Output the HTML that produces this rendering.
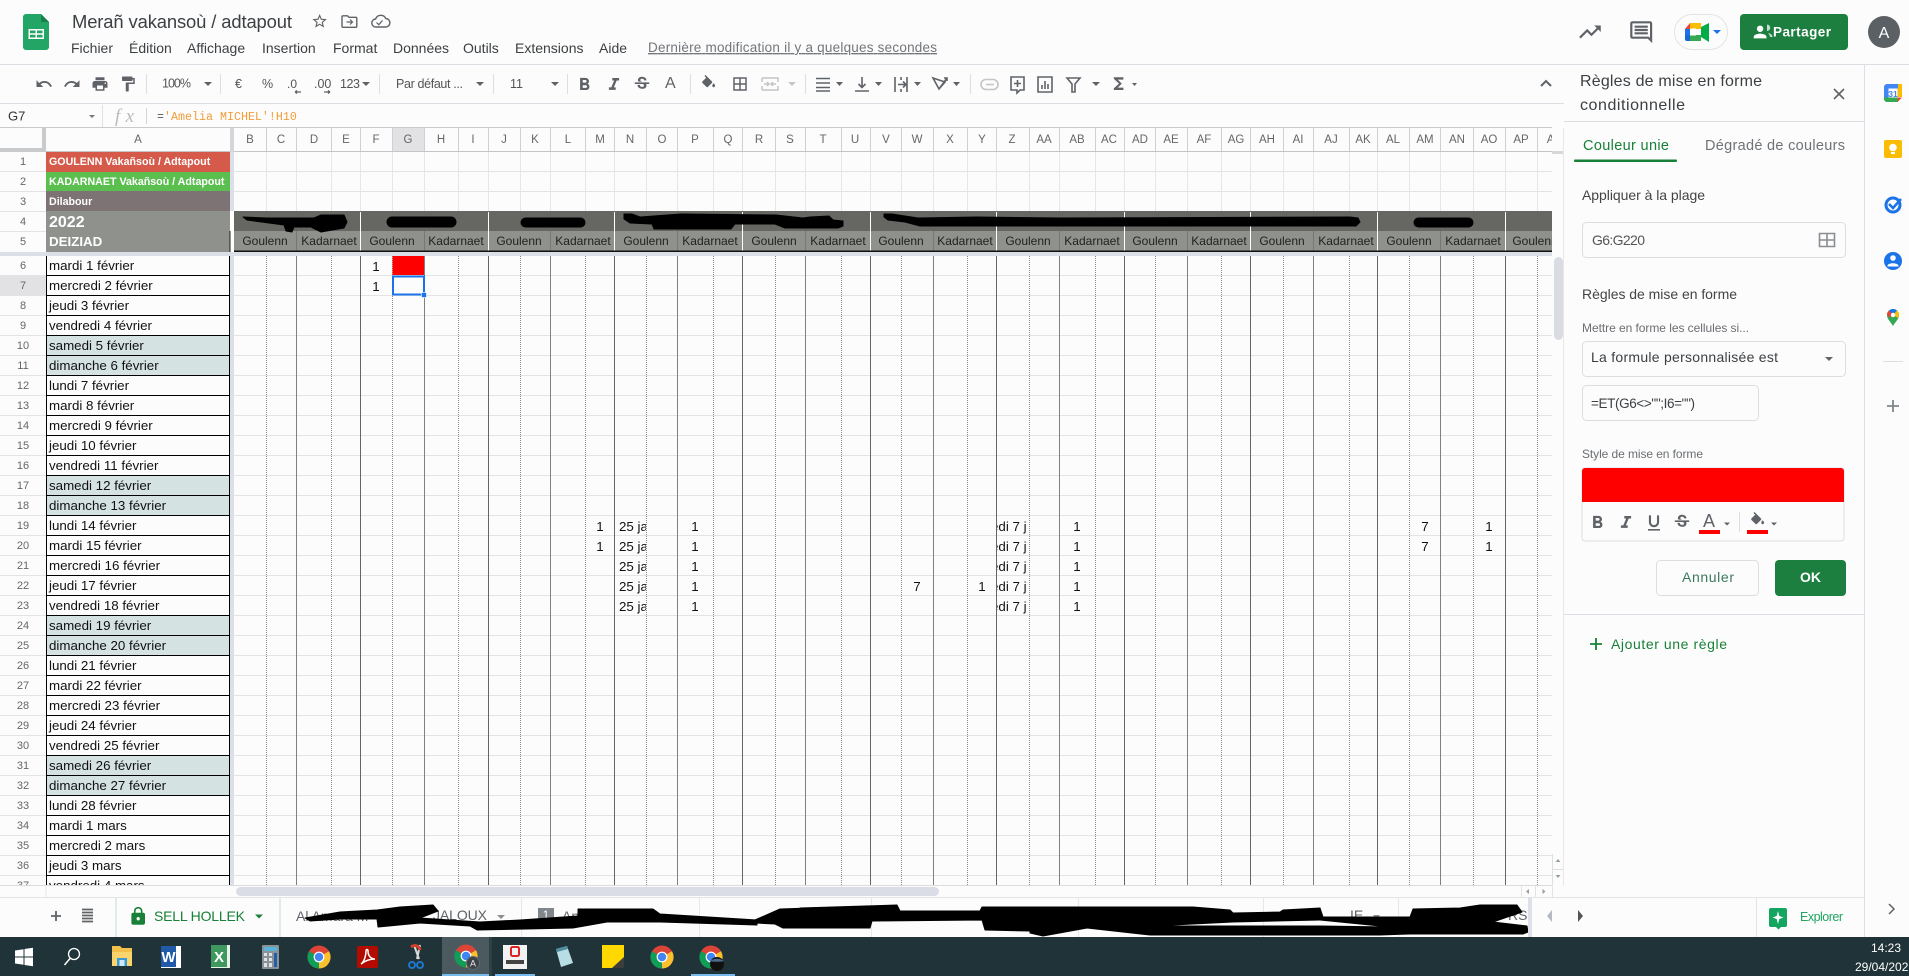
<!DOCTYPE html>
<html><head><meta charset="utf-8"><title>Merañ vakansoù / adtapout</title>
<style>
html,body{margin:0;padding:0;background:#fcfcfc;width:1909px;height:976px;overflow:hidden}
svg{display:block;font-family:"Liberation Sans",sans-serif}
.c{font-size:13.33px;fill:#111}
.n{font-size:11px;fill:#666;text-anchor:middle}
.h{font-size:11.5px;fill:#666;text-anchor:middle}
.g{font-size:12px;fill:#222;text-anchor:middle}
.d{font-size:13.33px;fill:#111;text-anchor:middle}
.m{font-size:14px;fill:#3c4043}
.t{font-size:12.5px;fill:#555}
.w{font-weight:bold;fill:#fff;font-size:10.67px}
.s{fill:#3c4043}
</style></head><body>
<svg width="1909" height="976" viewBox="0 0 1909 976" xmlns="http://www.w3.org/2000/svg">
<defs>
<pattern id="blk" width="10" height="20" patternUnits="userSpaceOnUse"><rect y="15" width="10" height="1" fill="#000"/></pattern>
<pattern id="lgt" width="10" height="20" patternUnits="userSpaceOnUse"><rect y="15" width="10" height="1" fill="#e3e3e3"/></pattern>
<g id="chrome"><circle r="11.5" fill="#db4437"/><path d="M10 -5.75A11.5 11.5 0 0 1 0 11.5L0 0Z" fill="#fbc02d"/><path d="M0 11.5A11.5 11.5 0 0 1 -10 -5.75L0 0Z" fill="#0f9d58"/><circle r="5.4" fill="#fff"/><circle r="4.2" fill="#4285f4"/></g>
<path id="strike" d="M7.240 8.750c-.26-.48-.39-1.030-.39-1.670 0-.61.13-1.160.4-1.670.26-.5.63-.93 1.110-1.290.48-.35 1.050-.63 1.700-.83.66-.19 1.390-.29 2.180-.29.81 0 1.540.11 2.210.34.66.22 1.230.54 1.690.94.47.4.83.88 1.080 1.430.25.55.38 1.150.38 1.810h-3.010c0-.31-.05-.59-.15-.85-.09-.27-.24-.49-.44-.68-.2-.19-.45-.33-.75-.44-.3-.1-.66-.16-1.060-.16-.39 0-.74.04-1.030.13-.29.09-.53.21-.72.36-.19.16-.34.34-.44.55-.1.21-.15.43-.15.66 0 .48.25.88.74 1.210.38.25.77.48 1.410.7H7.390c-.05-.08-.11-.17-.15-.25zM21 12v-2H3v2h9.620c.18.07.4.14.55.2.37.17.66.34.87.51.21.17.35.36.43.57.07.2.11.43.11.69 0 .23-.05.45-.14.66-.09.2-.23.38-.42.53-.19.15-.42.26-.71.35-.29.08-.63.13-1.010.13-.43 0-.83-.04-1.180-.13s-.66-.23-.91-.42c-.25-.19-.45-.44-.59-.75-.14-.31-.25-.76-.25-1.210H6.400c0 .55.08 1.130.24 1.580.16.45.37.85.65 1.210.28.35.6.66.98.92.37.26.78.48 1.220.65.44.17.9.3 1.380.39.48.08.96.13 1.440.13.8 0 1.530-.09 2.180-.28s1.210-.45 1.670-.79c.46-.34.82-.77 1.070-1.270s.38-1.070.38-1.710c0-.6-.1-1.140-.31-1.610-.05-.11-.11-.23-.17-.33H21z"/>
</defs>
<rect width="1909" height="976" fill="#fcfcfc"/>

<!-- top bar -->
<path d="M26 14h15l8 8v25a3 3 0 0 1-3 3H26a3 3 0 0 1-3-3V17a3 3 0 0 1 3-3z" fill="#23a566"/>
<path d="M41 14l8 8h-8z" fill="#188048"/>
<path d="M28.500 29h15.500v10h-15.500z M30 30.500v2.800h5.500v-2.800z M37 30.500v2.800h5.500v-2.800z M30 34.800v2.700h5.500v-2.700z M37 34.800v2.700h5.500v-2.700z" fill="#fff" fill-rule="evenodd"/>
<text x="72" y="28" font-size="18.4" fill="#3c4043" textLength="220">Merañ vakansoù / adtapout</text>
<path transform="translate(311,12.500) scale(.72)" d="M22 9.240l-7.190-.62L12 2 9.190 8.630 2 9.240l5.460 4.730L5.820 21 12 17.270 18.180 21l-1.630-7.030L22 9.240zM12 15.400l-3.760 2.270 1-4.280-3.320-2.880 4.380-.38L12 6.100l1.710 4.040 4.380.38-3.320 2.880 1 4.280L12 15.400z" fill="#5f6368"/>
<path d="M343 15.800h4.500l1.500 1.500h6.800a1 1 0 0 1 1 1v8a1 1 0 0 1-1 1h-12.800a1 1 0 0 1-1-1V16.800a1 1 0 0 1 1-1z" fill="none" stroke="#5f6368" stroke-width="1.400"/>
<path d="M346.500 22h6M350 19.500l2.500 2.500-2.500 2.500" fill="none" stroke="#5f6368" stroke-width="1.200"/>
<path d="M376 27a4 4 0 0 1-.4-8 5.500 5.500 0 0 1 10.200-.5 3.800 3.800 0 0 1-.3 8.500z" fill="none" stroke="#5f6368" stroke-width="1.400"/>
<path d="M376.500 22.500l2.300 2.200 3.700-4.200" fill="none" stroke="#5f6368" stroke-width="1.200"/>
<g class="m">
<text x="71" y="53">Fichier</text><text x="129" y="53">Édition</text><text x="187" y="53">Affichage</text><text x="262" y="53">Insertion</text><text x="333" y="53">Format</text><text x="393" y="53">Données</text><text x="463" y="53">Outils</text><text x="515" y="53">Extensions</text><text x="599" y="53">Aide</text>
</g>
<text x="648" y="52" font-size="13.500" fill="#72767a" text-decoration="underline" textLength="289">Dernière modification il y a quelques secondes</text>

<path transform="translate(1577,19) scale(1.080)" d="M16 6l2.290 2.290-4.880 4.880-4-4L2 16.590 3.410 18l6-6 4 4 6.300-6.290L22 12V6z" fill="#5f6368"/>
<path transform="translate(1628,19) scale(1.100)" d="M21.990 4c0-1.100-.89-2-1.990-2H4c-1.100 0-2 .9-2 2v12c0 1.100.9 2 2 2h14l4 4-.01-18zM20 4v13.170L18.830 16H4V4h16zM6 12h12v2H6zm0-3h12v2H6zm0-3h12v2H6z" fill="#5f6368"/>
<rect x="1674.500" y="14.500" width="53" height="35" rx="17.500" fill="#fcfcfc" stroke="#e3e3e6"/>
<path d="M1690 23h11v6h-11z" fill="#fbbc04"/><path d="M1685 29l5-6v6z" fill="#ea4335"/><path d="M1685 29h5v6h-5z" fill="#1a73e8"/><path d="M1685 35h5v6h-3a2 2 0 0 1-2-2z" fill="#1967d2"/><path d="M1690 35h11v6h-11z" fill="#34a853"/><path d="M1701 27v10l8 5V23z" fill="#00ac47"/><rect x="1690" y="28.500" width="6" height="7" fill="#fff"/>
<path d="M1713 30h8l-4 4z" fill="#1a73e8"/>
<rect x="1740" y="14" width="108" height="36" rx="4" fill="#1c7f3f"/>
<path d="M1767 24.500a3 3 0 0 1 0 6.500zM1768 33c2.500.5 4.500 1.800 4.500 4h-2.500c0-1.500-1-3-2-4z" fill="#bfe0cb"/>
<path transform="translate(1750.500,22.400) scale(.8)" d="M12 12c2.210 0 4-1.790 4-4s-1.790-4-4-4-4 1.790-4 4 1.790 4 4 4zm0 2c-2.670 0-8 1.340-8 4v2h16v-2c0-2.660-5.330-4-8-4z" fill="#fff"/>
<text x="1773" y="36.500" font-size="13.500" font-weight="bold" fill="#fff" textLength="58">Partager</text>
<circle cx="1884" cy="32" r="16" fill="#5b6064"/>
<text x="1884" y="38" font-size="16" fill="#fff" text-anchor="middle">A</text>
<rect y="64" width="1909" height="1" fill="#dcdee3"/>

<!-- toolbar -->
<rect y="103" width="1564" height="1" fill="#dcdee3"/>
<g fill="#5f6368">
<path transform="translate(35,75) scale(.75)" d="M12.500 8c-2.650 0-5.050.99-6.900 2.600L2 7v9h9l-3.620-3.620c1.390-1.160 3.160-1.880 5.120-1.880 3.540 0 6.550 2.310 7.600 5.500l2.370-.78C21.080 11.030 17.150 8 12.500 8z"/>
<path transform="translate(63,75) scale(.75)" d="M18.400 10.600C16.550 8.990 14.150 8 11.500 8c-4.650 0-8.580 3.030-9.960 7.220L3.900 16c1.050-3.190 4.050-5.500 7.600-5.500 1.950 0 3.730.72 5.120 1.880L13 16h9V7l-3.600 3.600z"/>
<path transform="translate(91,75) scale(.75)" d="M19 8H5c-1.660 0-3 1.340-3 3v6h4v4h12v-4h4v-6c0-1.660-1.340-3-3-3zm-3 11H8v-5h8v5zm3-7c-.55 0-1-.45-1-1s.45-1 1-1 1 .45 1 1-.45 1-1 1zm-1-9H6v4h12V3z"/>
<path transform="translate(119,75) scale(.75)" d="M18 4V3c0-.55-.45-1-1-1H5c-.55 0-1 .45-1 1v4c0 .55.45 1 1 1h12c.55 0 1-.45 1-1V6h1v4H9v11c0 .55.45 1 1 1h2c.55 0 1-.45 1-1v-9h8V4h-3z"/>
<path transform="translate(574,74.400) scale(.87)" d="M15.600 10.790c.97-.67 1.650-1.770 1.650-2.790 0-2.260-1.750-4-4-4H7v14h7.040c2.090 0 3.710-1.700 3.710-3.790 0-1.520-.86-2.820-2.150-3.420zM10 6.500h3c.83 0 1.500.67 1.500 1.500s-.67 1.500-1.500 1.500h-3v-3zm3.500 9H10v-3h3.500c.83 0 1.500.67 1.500 1.500s-.67 1.500-1.500 1.500z"/>
<path transform="translate(603.800,74.600) scale(.85)" d="M10 4v3h2.210l-3.420 8H6v3h8v-3h-2.210l3.420-8H18V4z"/>
<use href="#strike" transform="translate(632.400,74.400) scale(.8)"/>
<path transform="translate(700,75) scale(.72)" d="M16.560 8.940L7.620 0 6.210 1.410l2.380 2.380-5.150 5.150c-.59.59-.59 1.540 0 2.120l5.500 5.500c.29.29.68.44 1.060.44s.77-.15 1.060-.44l5.500-5.500c.59-.58.59-1.530 0-2.120zM19 11.500s-2 2.170-2 3.500c0 1.100.9 2 2 2s2-.9 2-2c0-1.330-2-3.500-2-3.500z"/>
<path transform="translate(731,75) scale(.75)" d="M3 3v18h18V3H3zm8 16H5v-6h6v6zm0-8H5V5h6v6zm8 8h-6v-6h6v6zm0-8h-6V5h6v6z"/>
<path transform="translate(1109,74) scale(.8)" d="M18 4H6v2l6.500 6L6 18v2h12v-3h-7l5-5-5-5h7z"/>
<!-- carets -->
<path d="M204 82h8l-4 4zM476 82h8l-4 4zM551 82h8l-4 4zM836 82h7l-3.500 4zM875 82h7l-3.500 4zM914 82h7l-3.500 4zM953 82h7l-3.500 4zM1092 82h8l-4 4zM1132 83h5l-2.500 3zM362 82h8l-4 4z"/>
<path d="M788 82h8l-4 4z" fill="#c4c6c9"/>
</g>
<g fill="none" stroke="#c2c4c7" stroke-width="1.500"><path d="M762 78h16v4M762 90h16v-4M762 78v4M762 86v4M764 84h4M776 84h-4M767 82l2 2-2 2M773 82l-2 2 2 2"/></g>
<g fill="none" stroke="#5f6368" stroke-width="1.600">
<path d="M816 78.500h14M816 83h14M816 87.500h14M816 91h14"/>
<path d="M862 77v10M858.500 84l3.500 3.500 3.500-3.500M855 91h14"/>
<path d="M895 77v15M907 77v15M901 77v3M901 89v3M898 84.500h7M903 81.500l3 3-3 3"/>
<path d="M933 78l12 4-6 7zM939 89l8-11M944 78l3 0 0 3"/>
<path d="M1011 77h13v13h-4l-3 3v-3h-6zM1017.500 80v7M1014 83.500h7"/>
<path d="M1038 77h14v15h-14zM1042 89v-4M1045 89v-8M1048 89v-5"/>
<path d="M1067 78h13l-5 6v8h-3v-8z"/>
<path d="M1541 86l5-5 5 5" stroke-width="2"/>
</g>
<rect x="981" y="79.500" width="17" height="10" rx="5" fill="none" stroke="#c2c4c7" stroke-width="1.600"/><path d="M986 84.500h8" stroke="#c2c4c7" stroke-width="1.500"/>
<path d="M146.500 74v20M220.500 74v20M379.500 74v20M493.500 74v20M567.500 74v20M690.500 74v20M805.500 74v20M970.500 74v20" stroke="#dcdee3"/>
<g class="t">
<text x="162" y="87.500" textLength="29">100%</text>
<text x="235" y="88">€</text><text x="262" y="88">%</text>
<text x="287" y="88" font-size="12">.0</text><text x="314" y="88">.00</text><text x="340" y="88" textLength="20">123</text>
<text x="396" y="88" textLength="67">Par défaut ...</text>
<text x="510" y="88">11</text>
<text x="665" y="88" font-size="16" fill="#5f6368">A</text>
</g>
<path d="M295 92h6M295 92l2-1.500M295 92l2 1.500M324 92h6M330 92l-2-1.500M330 92l-2 1.500" stroke="#5f6368" stroke-width="1.300" fill="none"/>

<!-- formula bar -->
<rect y="127" width="1552" height="1" fill="#c9cacc"/>
<text x="8" y="120.500" font-size="13" fill="#333">G7</text>
<path d="M89 115h6l-3 3z" fill="#777"/>
<path d="M102.500 105v22" stroke="#e8dfd8"/><path d="M146.500 108v16" stroke="#d5d6d9"/>
<text x="115" y="122" font-size="19" fill="#bbb" font-style="italic" font-family="Liberation Serif" textLength="19">fx</text>
<text x="157" y="120" font-family="Liberation Mono" font-size="11.670" fill="#555">=<tspan fill="#f29d38">'Amelia MICHEL'!H10</tspan></text>

<!-- column header -->
<rect y="128" width="1552" height="23" fill="#fcfcfc"/>
<rect x="392" y="128" width="32" height="23" fill="#e2e2e5"/>
<rect y="151" width="1552" height="1" fill="#c4c5c7"/>
<rect x="42" y="128" width="4" height="24" fill="#c8cacc"/><rect y="148" width="46" height="4" fill="#c8cacc"/>
<rect x="230" y="128" width="4" height="24" fill="#d3d5d9"/>
<path d="M266.500 128V151M296.500 128V151M331.500 128V151M360.500 128V151M392.500 128V151M424.500 128V151M458.500 128V151M488.500 128V151M520.500 128V151M550.500 128V151M585.500 128V151M614.500 128V151M646.500 128V151M677.500 128V151M713.500 128V151M742.500 128V151M775.500 128V151M805.500 128V151M841.500 128V151M870.500 128V151M901.500 128V151M933.500 128V151M967.500 128V151M996.500 128V151M1029.500 128V151M1059.500 128V151M1095.500 128V151M1124.500 128V151M1155.500 128V151M1187.500 128V151M1221.500 128V151M1250.500 128V151M1283.500 128V151M1313.500 128V151M1349.500 128V151M1377.500 128V151M1409.500 128V151M1440.500 128V151M1473.500 128V151M1505.500 128V151M1537.500 128V151" stroke="#cfd0d2"/>
<g class="h">
<text x="138" y="143">A</text><text x="250" y="143">B</text><text x="281" y="143">C</text><text x="314" y="143">D</text><text x="346" y="143">E</text><text x="376" y="143">F</text><text x="408" y="143">G</text><text x="441" y="143">H</text><text x="473" y="143">I</text><text x="504" y="143">J</text><text x="535" y="143">K</text><text x="568" y="143">L</text><text x="600" y="143">M</text><text x="630" y="143">N</text><text x="662" y="143">O</text><text x="695" y="143">P</text><text x="728" y="143">Q</text><text x="759" y="143">R</text><text x="790" y="143">S</text><text x="823" y="143">T</text><text x="855" y="143">U</text><text x="886" y="143">V</text><text x="917" y="143">W</text><text x="950" y="143">X</text><text x="982" y="143">Y</text><text x="1012" y="143">Z</text><text x="1044" y="143">AA</text><text x="1077" y="143">AB</text><text x="1109" y="143">AC</text><text x="1140" y="143">AD</text><text x="1171" y="143">AE</text><text x="1204" y="143">AF</text><text x="1236" y="143">AG</text><text x="1267" y="143">AH</text><text x="1298" y="143">AI</text><text x="1331" y="143">AJ</text><text x="1363" y="143">AK</text><text x="1393" y="143">AL</text><text x="1425" y="143">AM</text><text x="1457" y="143">AN</text><text x="1489" y="143">AO</text><text x="1521" y="143">AP</text><text x="1555" y="143">AQ</text>
</g>

<!-- top rows 1-3 -->
<path d="M0 171.500H46M234 171.500H1552M0 191.500H46M234 191.500H1552M0 211.500H46M0 231.500H46" stroke="#e3e3e3"/>
<path d="M266.500 152V211M296.500 152V211M331.500 152V211M360.500 152V211M392.500 152V211M424.500 152V211M458.500 152V211M488.500 152V211M520.500 152V211M550.500 152V211M585.500 152V211M614.500 152V211M646.500 152V211M677.500 152V211M713.500 152V211M742.500 152V211M775.500 152V211M805.500 152V211M841.500 152V211M870.500 152V211M901.500 152V211M933.500 152V211M967.500 152V211M996.500 152V211M1029.500 152V211M1059.500 152V211M1095.500 152V211M1124.500 152V211M1155.500 152V211M1187.500 152V211M1221.500 152V211M1250.500 152V211M1283.500 152V211M1313.500 152V211M1349.500 152V211M1377.500 152V211M1409.500 152V211M1440.500 152V211M1473.500 152V211M1505.500 152V211M1537.500 152V211" stroke="#e6e6e6"/>
<rect x="230" y="152" width="4" height="59" fill="#dadfe8"/>
<rect x="46" y="152" width="184" height="20" fill="#d55a4a"/>
<rect x="46" y="172" width="184" height="19" fill="#5abf4f"/>
<rect x="46" y="191" width="184" height="20" fill="#7e7374"/>
<rect x="46" y="211" width="184" height="41" fill="#8f918d"/>
<text class="w" x="49" y="165">GOULENN Vakañsoù / Adtapout</text>
<text class="w" x="49" y="185">KADARNAET Vakañsoù / Adtapout</text>
<text class="w" x="49" y="205">Dilabour</text>
<text x="49" y="227" font-size="16" font-weight="bold" fill="#fff">2022</text>
<text x="49" y="246" font-size="13.330" font-weight="bold" fill="#fff">DEIZIAD</text>

<!-- rows 4/5 -->
<rect x="234" y="211" width="1318" height="20" fill="#666762"/>
<rect x="234" y="231" width="1318" height="20" fill="#8f918c"/>
<path d="M296.500 231V251M424.500 231V251M550.500 231V251M677.500 231V251M805.500 231V251M933.500 231V251M1059.500 231V251M1187.500 231V251M1313.500 231V251M1440.500 231V251" stroke="#777873"/>
<path d="M360.500 212V251M488.500 212V251M614.500 212V251M742.500 212V251M870.500 212V251M996.500 212V251M1124.500 212V251M1250.500 212V251M1377.500 212V251M1505.500 212V251" stroke="#fff"/>
<rect x="230" y="211" width="4" height="41" fill="#fff"/>
<rect x="229.500" y="231" width="1" height="21" fill="#222"/>
<rect x="234" y="250.500" width="1318" height="1.500" fill="#111"/>
<g class="g">
<text x="265" y="245">Goulenn</text><text x="329" y="245">Kadarnaet</text>
<text x="392" y="245">Goulenn</text><text x="456" y="245">Kadarnaet</text>
<text x="519" y="245">Goulenn</text><text x="583" y="245">Kadarnaet</text>
<text x="646" y="245">Goulenn</text><text x="710" y="245">Kadarnaet</text>
<text x="774" y="245">Goulenn</text><text x="838" y="245">Kadarnaet</text>
<text x="901" y="245">Goulenn</text><text x="965" y="245">Kadarnaet</text>
<text x="1028" y="245">Goulenn</text><text x="1092" y="245">Kadarnaet</text>
<text x="1155" y="245">Goulenn</text><text x="1219" y="245">Kadarnaet</text>
<text x="1282" y="245">Goulenn</text><text x="1346" y="245">Kadarnaet</text>
<text x="1409" y="245">Goulenn</text><text x="1473" y="245">Kadarnaet</text>
<text x="1535" y="245">Goulenn</text>
</g>
<g fill="#000" stroke="#000" stroke-width="1" stroke-linejoin="round">
<path d="M243 217L267 218L314 218L321 215L344 215L347 222L344 228L321 232L311 227L294 227L292 232L286 231L284 225L247 220Z"/>
<rect x="387" y="217" width="69" height="10" rx="5"/>
<rect x="521" y="218" width="64" height="9" rx="4.500"/>
<path d="M624 214L632 214L640 217L681 214L776 215L803 218L810 217L829 216L833 220L843 221L843 226L838 228L785 228L775 224L735 224L731 229L654 229L652 224L630 223L624 219Z"/>
<path d="M884 214L892 214L918 218L977 217L1060 218L1350 217L1358 218L1360 222L1356 226L1100 226L920 226L905 222L888 220L884 217Z"/>
<rect x="1414" y="218" width="59" height="9" rx="4.500"/>
</g>

<!-- frozen band -->
<rect y="252" width="1552" height="4" fill="#dadfe8"/>
<rect x="230" y="256" width="4" height="630" fill="#dadfe8"/>

<!-- data grid lines -->
<rect x="234" y="256" width="1318" height="630" fill="url(#lgt)"/>
<rect x="0" y="256" width="46" height="630" fill="url(#lgt)"/>
<rect x="0" y="276" width="46" height="19" fill="#e2e2e5"/>
<path d="M266.500 256V886M331.500 256V886M392.500 256V886M458.500 256V886M520.500 256V886M585.500 256V886M646.500 256V886M713.500 256V886M775.500 256V886M841.500 256V886M901.500 256V886M967.500 256V886M1029.500 256V886M1095.500 256V886M1155.500 256V886M1221.500 256V886M1283.500 256V886M1349.500 256V886M1409.500 256V886M1473.500 256V886M1537.500 256V886" stroke="#8a8a8a" stroke-dasharray="1 1"/>
<path d="M296.500 256V886M424.500 256V886M550.500 256V886M677.500 256V886M805.500 256V886M933.500 256V886M1059.500 256V886M1187.500 256V886M1313.500 256V886M1440.500 256V886" stroke="#808080"/>
<path d="M360.500 256V886M488.500 256V886M614.500 256V886M742.500 256V886M870.500 256V886M996.500 256V886M1124.500 256V886M1250.500 256V886M1377.500 256V886M1505.500 256V886" stroke="#666"/>

<!-- column A -->
<rect x="46" y="256" width="184" height="630" fill="#fcfcfc"/>
<rect x="46" y="336" width="184" height="40" fill="#d5e2e2"/>
<rect x="46" y="476" width="184" height="40" fill="#d5e2e2"/>
<rect x="46" y="616" width="184" height="40" fill="#d5e2e2"/>
<rect x="46" y="756" width="184" height="40" fill="#d5e2e2"/>
<rect x="46" y="256" width="184" height="630" fill="url(#blk)"/>
<path d="M46.500 256V886M229.500 256V886" stroke="#000"/>
<g class="c">
<text x="49" y="270">mardi 1 février</text><text x="49" y="290">mercredi 2 février</text><text x="49" y="310">jeudi 3 février</text><text x="49" y="330">vendredi 4 février</text><text x="49" y="350">samedi 5 février</text><text x="49" y="370">dimanche 6 février</text><text x="49" y="390">lundi 7 février</text><text x="49" y="410">mardi 8 février</text><text x="49" y="430">mercredi 9 février</text><text x="49" y="450">jeudi 10 février</text><text x="49" y="470">vendredi 11 février</text><text x="49" y="490">samedi 12 février</text><text x="49" y="510">dimanche 13 février</text><text x="49" y="530">lundi 14 février</text><text x="49" y="550">mardi 15 février</text><text x="49" y="570">mercredi 16 février</text><text x="49" y="590">jeudi 17 février</text><text x="49" y="610">vendredi 18 février</text><text x="49" y="630">samedi 19 février</text><text x="49" y="650">dimanche 20 février</text><text x="49" y="670">lundi 21 février</text><text x="49" y="690">mardi 22 février</text><text x="49" y="710">mercredi 23 février</text><text x="49" y="730">jeudi 24 février</text><text x="49" y="750">vendredi 25 février</text><text x="49" y="770">samedi 26 février</text><text x="49" y="790">dimanche 27 février</text><text x="49" y="810">lundi 28 février</text><text x="49" y="830">mardi 1 mars</text><text x="49" y="850">mercredi 2 mars</text><text x="49" y="870">jeudi 3 mars</text><text x="49" y="890">vendredi 4 mars</text>
</g>
<g class="n">
<text x="23" y="165">1</text><text x="23" y="185">2</text><text x="23" y="205">3</text><text x="23" y="225">4</text><text x="23" y="245">5</text>
<text x="23" y="269">6</text><text x="23" y="289">7</text><text x="23" y="309">8</text><text x="23" y="329">9</text><text x="23" y="349">10</text><text x="23" y="369">11</text><text x="23" y="389">12</text><text x="23" y="409">13</text><text x="23" y="429">14</text><text x="23" y="449">15</text><text x="23" y="469">16</text><text x="23" y="489">17</text><text x="23" y="509">18</text><text x="23" y="529">19</text><text x="23" y="549">20</text><text x="23" y="569">21</text><text x="23" y="589">22</text><text x="23" y="609">23</text><text x="23" y="629">24</text><text x="23" y="649">25</text><text x="23" y="669">26</text><text x="23" y="689">27</text><text x="23" y="709">28</text><text x="23" y="729">29</text><text x="23" y="749">30</text><text x="23" y="769">31</text><text x="23" y="789">32</text><text x="23" y="809">33</text><text x="23" y="829">34</text><text x="23" y="849">35</text><text x="23" y="869">36</text><text x="23" y="889">37</text>
</g>

<!-- cells -->
<rect x="392.500" y="256" width="31.500" height="19" fill="#fe0000"/>
<rect x="393" y="276.500" width="31" height="18" fill="none" stroke="#1a73e8" stroke-width="2"/>
<rect x="421.500" y="292.500" width="5" height="5" fill="#1a73e8" stroke="#fff" stroke-width=".6"/>
<g class="d">
<text x="376" y="271">1</text><text x="376" y="291">1</text>
<text x="600" y="531">1</text><text x="600" y="551">1</text>
<text x="695" y="531">1</text><text x="695" y="551">1</text><text x="695" y="571">1</text><text x="695" y="591">1</text><text x="695" y="611">1</text>
<text x="917" y="591">7</text><text x="982" y="591">1</text>
<text x="1077" y="531">1</text><text x="1077" y="551">1</text><text x="1077" y="571">1</text><text x="1077" y="591">1</text><text x="1077" y="611">1</text>
<text x="1425" y="531">7</text><text x="1425" y="551">7</text>
<text x="1489" y="531">1</text><text x="1489" y="551">1</text>
</g>
<svg x="618" y="516" width="28" height="100"><g font-size="13.330" fill="#111"><text x="1" y="15">25 janvier</text><text x="1" y="35">25 janvier</text><text x="1" y="55">25 janvier</text><text x="1" y="75">25 janvier</text><text x="1" y="95">25 janvier</text></g></svg>
<svg x="997" y="516" width="30" height="100"><g font-size="13.330" fill="#111"><text x="-6" y="15">edi 7 janvier</text><text x="-6" y="35">edi 7 janvier</text><text x="-6" y="55">edi 7 janvier</text><text x="-6" y="75">edi 7 janvier</text><text x="-6" y="95">edi 7 janvier</text></g></svg>

<!-- scrollbars -->
<rect x="1552" y="128" width="12" height="769" fill="#fcfcfc"/>
<rect x="1552" y="151" width="11" height="3" fill="#d6d7da"/>
<path d="M1563.500 128V897" stroke="#f0e6e0"/>
<rect x="1554" y="257" width="9" height="83" rx="4.500" fill="#dadce4"/>
<path d="M1552.500 854V886M1552.500 869.500H1563" stroke="#dedfe2"/>
<path d="M1555.500 862l2.500-3 2.500 3zM1555.500 875l2.500 3 2.500-3z" fill="#9a9ca0"/>
<rect y="885.500" width="1564" height="11.500" fill="#fcfcfc"/>
<rect y="885" width="1552" height="1" fill="#dcdcdc"/>
<rect x="45.500" y="885" width="1" height="12" fill="#e5e6e8"/>
<rect x="236" y="887" width="703" height="9" rx="4.500" fill="#dadce6"/>
<path d="M1529 889l-3 2.500 3 2.500zM1542.500 889v5l3-2.500z" fill="#9a9ca0"/>
<path d="M1521.500 886V897M1535.500 886V897M1552.500 886V897" stroke="#e2e3e5"/>

<!-- sidebar -->
<rect x="1564" y="65" width="300" height="832" fill="#fcfcfc"/>
<path d="M1864.500 65V937" stroke="#dcdee8"/>
<rect x="1564" y="121" width="300" height="1" fill="#dcdee3"/>
<text x="1580" y="86" font-size="16" fill="#3c4043" textLength="182">Règles de mise en forme</text>
<text x="1580" y="110" font-size="16" fill="#3c4043" textLength="105">conditionnelle</text>
<path d="M1834 89l10 10M1844 89l-10 10" stroke="#5f6368" stroke-width="1.600"/>
<text x="1583" y="150" font-size="14.500" fill="#188038" textLength="86">Couleur unie</text>
<rect x="1574" y="159.500" width="103" height="2.500" rx="1" fill="#188038"/>
<text x="1705" y="150" font-size="14.500" fill="#6f7276" textLength="140">Dégradé de couleurs</text>
<text x="1582" y="200" font-size="14" fill="#444" textLength="123">Appliquer à la plage</text>
<rect x="1582.500" y="222.500" width="263" height="35" rx="4" fill="#fcfcfc" stroke="#dcdee2"/>
<text x="1592" y="245" font-size="14" fill="#555" textLength="53">G6:G220</text>
<path d="M1819.500 233.500h15v13h-15zM1827 233.500v13M1819.500 240h15" fill="none" stroke="#8a8d91" stroke-width="1.600"/>
<text x="1582" y="299" font-size="14" fill="#444" textLength="155">Règles de mise en forme</text>
<text x="1582" y="332" font-size="12" fill="#6b6e72" textLength="167">Mettre en forme les cellules si...</text>
<rect x="1582.500" y="341.500" width="263" height="35" rx="4" fill="#fcfcfc" stroke="#dcdee2"/>
<text x="1591" y="362" font-size="14" fill="#3c4043" textLength="187">La formule personnalisée est</text>
<path d="M1825 357h8l-4 4z" fill="#5f6368"/>
<rect x="1582.500" y="385.500" width="176" height="35" rx="4" fill="#fcfcfc" stroke="#dcdee2"/>
<text x="1591" y="408" font-size="13.500" fill="#3c4043" textLength="104">=ET(G6&lt;&gt;"";I6="")</text>
<text x="1582" y="458" font-size="12" fill="#6b6e72" textLength="121">Style de mise en forme</text>
<rect x="1582" y="468" width="262" height="73" rx="3" fill="#fcfcfc" stroke="#dcdee2"/>
<path d="M1582 471a3 3 0 0 1 3-3h256a3 3 0 0 1 3 3v31h-262z" fill="#fe0000"/>
<g fill="#5f6368">
<path transform="translate(1587,512.400) scale(.87)" d="M15.600 10.790c.97-.67 1.650-1.770 1.650-2.790 0-2.260-1.750-4-4-4H7v14h7.040c2.090 0 3.710-1.700 3.710-3.790 0-1.520-.86-2.820-2.150-3.420zM10 6.500h3c.83 0 1.500.67 1.500 1.500s-.67 1.500-1.500 1.500h-3v-3zm3.500 9H10v-3h3.500c.83 0 1.500.67 1.500 1.500s-.67 1.500-1.500 1.500z"/>
<path transform="translate(1615.800,512.600) scale(.85)" d="M10 4v3h2.210l-3.420 8H6v3h8v-3h-2.210l3.420-8H18V4z"/>
<path transform="translate(1643.800,512.800) scale(.85)" d="M12 17c3.310 0 6-2.690 6-6V3h-2.500v8c0 1.930-1.570 3.500-3.500 3.500S8.500 12.930 8.500 11V3H6v8c0 3.310 2.690 6 6 6zm-7 2v2h14v-2H5z"/>
<use href="#strike" transform="translate(1672.400,512.400) scale(.8)"/>
<path transform="translate(1749,512) scale(.72)" d="M16.560 8.940L7.620 0 6.210 1.410l2.380 2.380-5.150 5.150c-.59.59-.59 1.540 0 2.120l5.500 5.500c.29.29.68.44 1.060.44s.77-.15 1.060-.44l5.500-5.500c.59-.58.59-1.530 0-2.120zM19 11.500s-2 2.170-2 3.500c0 1.100.9 2 2 2s2-.9 2-2c0-1.330-2-3.500-2-3.500z"/>
<path d="M1724 522.500h6l-3 3zM1771 522.500h6l-3 3z"/>
</g>
<text x="1709" y="527" font-size="18" fill="#5f6368" text-anchor="middle">A</text>
<rect x="1699" y="530" width="21" height="4" fill="#fe0000"/>
<rect x="1747" y="530" width="21" height="4" fill="#fe0000"/>
<path d="M1739.500 512v20" stroke="#dcdee2"/>
<rect x="1656.500" y="560.500" width="102" height="35" rx="4" fill="#fcfcfc" stroke="#dcdee2"/>
<text x="1682" y="582" font-size="14" fill="#3a7a5c" textLength="52">Annuler</text>
<rect x="1775" y="560" width="71" height="36" rx="4" fill="#1c7f3f"/>
<text x="1800" y="582" font-size="14" font-weight="bold" fill="#fff" textLength="21">OK</text>
<rect x="1564" y="614" width="300" height="1" fill="#dcdee8"/>
<path d="M1596 638v12M1590 644h12" stroke="#188038" stroke-width="1.800"/>
<text x="1611" y="649" font-size="14" fill="#188038" textLength="116">Ajouter une règle</text>

<!-- right strip -->
<path d="M1884 84h18v18h-18z" fill="#fff"/>
<path d="M1884 87a3 3 0 0 1 3-3h11v4.500h-14z" fill="#4285f4"/><path d="M1898 84h4v4.500h-4z" fill="#fbbc04"/><path d="M1897.500 88.500h4.500v8.500h-4.500z" fill="#fbbc04"/><path d="M1884 88.500h4.500v9.500H1884z" fill="#4285f4"/><path d="M1884 97.500h14v4.500h-11a3 3 0 0 1-3-3z" fill="#34a853"/><path d="M1897.500 97.500h4.500l-4.500 4.500z" fill="#ea4335"/>
<text x="1893" y="97" font-size="8.500" font-weight="bold" fill="#4285f4" text-anchor="middle">31</text>
<rect x="1884" y="140" width="18" height="18" rx="2" fill="#fbbc04"/>
<circle cx="1893" cy="147.500" r="3.800" fill="#fff"/><rect x="1891" y="152" width="4" height="2" fill="#fff"/>
<circle cx="1893" cy="205" r="7" fill="none" stroke="#1a73e8" stroke-width="3"/>
<path d="M1889 204l4 4 8-9" fill="none" stroke="#1a73e8" stroke-width="2.500"/>
<circle cx="1893" cy="261" r="9" fill="#1a73e8"/>
<circle cx="1893" cy="258" r="2.800" fill="#fff"/><path d="M1887.500 265.500c1-3 9.500-3 11 0v1h-11z" fill="#fff"/>
<path d="M1893 326c-3-5-6-7-6-11a6 6 0 0 1 12 0c0 4-3 6-6 11z" fill="#34a853"/>
<path d="M1887 315a6 6 0 0 1 2-4.500l4 4-3 3z" fill="#ea4335"/><path d="M1889 310.500a6 6 0 0 1 8 0l-4 4z" fill="#1a73e8"/><path d="M1897 310.500a6 6 0 0 1 2 4.500c0 1-.5 2-1 3l-5-3z" fill="#fbbc04"/>
<circle cx="1893" cy="315" r="2.200" fill="#fff"/>
<rect x="1883" y="361" width="20" height="1" fill="#dcdee3"/>
<path d="M1893 400v12M1887 406h12" stroke="#80868b" stroke-width="1.800"/>

<!-- tab bar -->
<rect y="897" width="1864" height="1" fill="#e3e4e6"/>
<rect y="898" width="1864" height="39" fill="#fcfcfc"/>
<path d="M56 911v10M51 916h10" stroke="#5f6368" stroke-width="1.800"/>
<path d="M82 909.500h11M82 912.500h11M82 915.500h11M82 918.500h11M82 921.500h11" stroke="#5f6368" stroke-width="1.700"/>
<rect x="115" y="898" width="2" height="39" fill="#e3eaea"/><rect x="279" y="898" width="2" height="39" fill="#e3eaea"/>
<path transform="translate(128,906) scale(.85)" d="M18 8h-1V6c0-2.760-2.240-5-5-5S7 3.240 7 6v2H6c-1.100 0-2 .9-2 2v10c0 1.100.9 2 2 2h12c1.100 0 2-.9 2-2V10c0-1.100-.9-2-2-2zm-6 9c-1.100 0-2-.9-2-2s.9-2 2-2 2 .9 2 2-.9 2-2 2zm3.100-9H8.900V6c0-1.710 1.390-3.100 3.100-3.100 1.710 0 3.100 1.390 3.100 3.100v2z" fill="#188038"/>
<text x="154" y="921" font-size="14" fill="#188038" textLength="91">SELL HOLLEK</text>
<path d="M255 914.500h8l-4 4z" fill="#188038"/>
<text x="296" y="921" font-size="14" fill="#5f6368">Al Amara M</text>
<text x="433" y="920" font-size="14" fill="#5f6368" textLength="54">JALOUX</text>
<path d="M497 915h8l-4 4z" fill="#8a8d91"/>
<path d="M521.500 898V937M699.500 898V937M871.500 898V937M1078.500 898V937M1263.500 898V937M1398.500 898V937" stroke="#e6e7e9"/>
<rect x="538" y="908" width="16" height="13" fill="#80868b"/>
<text x="546" y="919" font-size="11.500" fill="#fff" text-anchor="middle">1</text>
<text x="562" y="921" font-size="14" fill="#5f6368">An</text>
<text x="1350" y="920" font-size="14" fill="#5f6368">IE</text>
<path d="M1373 915h7l-3.500 4z" fill="#8a8d91"/>
<text x="1508" y="920" font-size="14" fill="#5f6368">RS</text>
<g fill="#000" stroke="#000" stroke-width="1" stroke-linejoin="round">
<path d="M305 918L340 912L377 910L400 907L433 905L438 911L420 918L480 922L520 920L578 916L578 909L653 909L660 914L757 920L757 925L660 922L607 922L573 928L477 930L470 926L420 923L378 927L377 919L340 919L310 921Z"/>
<path d="M755 920L780 909L810 908L810 928L783 928L775 924L755 923Z"/>
<path d="M800 908L897 905L900 911L980 911L982 907L1193 907L1230 910L1233 913L1280 912L1283 910L1320 908L1320 920L1233 922L1153 926L1320 926L1320 935L1150 935L1087 928L1043 936L1030 933L1030 931L985 930L982 920L872 921L870 928L800 928Z"/>
<path d="M1320 908L1323 917L1410 917L1413 909L1460 908L1480 905L1517 905L1522 912L1493 922L1527 926L1528 932L1523 934L1410 934L1380 935L1320 935L1320 926L1390 927L1320 920Z"/>
</g>
<rect x="1528" y="897" width="4" height="40" fill="#dde0e8"/>
<path d="M1552 910l-5 6 5 6z" fill="#b4b9c4"/>
<path d="M1578 910l5 6-5 6z" fill="#555"/>
<path d="M1756.500 898V937" stroke="#e3e4e6"/>
<path d="M1771 908h14a2 2 0 0 1 2 2v15a2 2 0 0 1-2 2h-4l-2.500 2.500-2.500-2.500h-5a2 2 0 0 1-2-2v-15a2 2 0 0 1 2-2z" fill="#14a560"/>
<path d="M1778 911l1.300 5 4.200 1.500-4.200 1.500-1.300 5-1.300-5-4.200-1.500 4.200-1.500z" fill="#fff"/>
<text x="1800" y="921" font-size="12.500" fill="#1fa463" textLength="43">Explorer</text>
<path d="M1889 904l5 5-5 5" fill="none" stroke="#5f6368" stroke-width="1.500"/>

<!-- taskbar -->
<rect y="937" width="1909" height="39" fill="#203338"/>
<rect x="442" y="937" width="47" height="39" fill="#4a5a5e"/>
<rect x="489" y="937" width="3" height="39" fill="#2e4145"/>
<rect x="442" y="974" width="47" height="2" fill="#76b9ed"/>
<rect x="495" y="974" width="40" height="2" fill="#76b9ed"/>
<rect x="691" y="974" width="44" height="2" fill="#76b9ed"/>
<g fill="#fff">
<path d="M15 950.500l8.500-1.200v7.200H15zM24.500 949l8.500-1.300v8.800h-8.500zM15 957.500h8.500v7.200L15 963.500zM24.500 957.500H33v8.800l-8.500-1.300z"/>
</g>
<circle cx="74" cy="954" r="5.500" fill="none" stroke="#fff" stroke-width="1.300"/><path d="M70 958.500l-5.500 6.500" stroke="#fff" stroke-width="1.500"/>
<path d="M112 946h8l2 2h10v18h-20z" fill="#f4c04c"/><rect x="112" y="952" width="20" height="14" fill="#fbd46b"/><rect x="117" y="958" width="10" height="8" fill="#3a9ad9"/><rect x="119.500" y="960" width="5" height="6" fill="#cde8f7"/>
<rect x="161" y="946" width="20" height="22" fill="#fff"/><rect x="161" y="946" width="15" height="21" fill="#1f5ba8"/>
<text x="168.500" y="962" font-size="15" font-weight="bold" fill="#fff" text-anchor="middle">W</text>
<rect x="211" y="945" width="19" height="23" fill="#e8f2ea"/><path d="M211 945h16v22h-16z" fill="#2c8f4f" opacity=".9"/>
<text x="219" y="962" font-size="15" font-weight="bold" fill="#fff" text-anchor="middle">X</text>
<rect x="262" y="945" width="17" height="24" rx="1" fill="#8b9297"/><rect x="264" y="947" width="13" height="4" fill="#57b5dc"/>
<path d="M264 953h3v3h-3zM269 953h3v3h-3zM264 958h3v3h-3zM269 958h3v3h-3zM264 963h3v4h-3zM269 963h3v4h-3z" fill="#dfe3e5"/><rect x="274" y="953" width="3" height="14" fill="#1d5fa8"/>
<use href="#chrome" x="319" y="957"/>
<rect x="357" y="946" width="21" height="22" rx="2" fill="#b30b00"/>
<path d="M361 964c3-2 5-8 5-13 0-2 2-2 2 0 0 5 3 8 7 8-4 0-9 1-14 5z" fill="none" stroke="#fff" stroke-width="1.500"/>
<path d="M414 945l5 14M420 945l-3 14" stroke="#d9d9d9" stroke-width="2"/><path d="M411 947c4-3 8-1 9 3" fill="none" stroke="#d0402a" stroke-width="3"/>
<circle cx="412" cy="965" r="3" fill="none" stroke="#1f77c9" stroke-width="2"/><circle cx="420" cy="965" r="3" fill="none" stroke="#1f77c9" stroke-width="2"/>
<use href="#chrome" x="466" y="956"/>
<circle cx="473" cy="963" r="6.500" fill="#3c4449" stroke="#5f6a6e"/><text x="473" y="966.500" font-size="9" fill="#e8eaed" text-anchor="middle">A</text>
<rect x="503" y="945" width="24" height="24" fill="#f2f2f2"/><rect x="511" y="947" width="8" height="9" rx="1.500" fill="none" stroke="#d22" stroke-width="2"/><rect x="506" y="960" width="18" height="4" fill="#444"/>
<path d="M556 949l11-3 6 17-12 4z" fill="#b9dde4"/><path d="M556 949l11-3 1 3-11 3z" fill="#4f8ea0"/>
<rect x="602" y="945" width="22" height="23" fill="#ffd800"/><path d="M612 968l12-11v11z" fill="#3d3d3d"/>
<use href="#chrome" x="662" y="957"/>
<use href="#chrome" x="711" y="957"/>
<circle cx="717" cy="964" r="7" fill="#111"/><path d="M710 961c4-3 10-3 14 0-4 1-10 1-14 0z" fill="#4b6b8c"/>
<text x="1871" y="952" font-size="12" fill="#fff">14:23</text>
<text x="1855" y="971" font-size="12" fill="#fff">29/04/2022</text>
</svg>
</body></html>
